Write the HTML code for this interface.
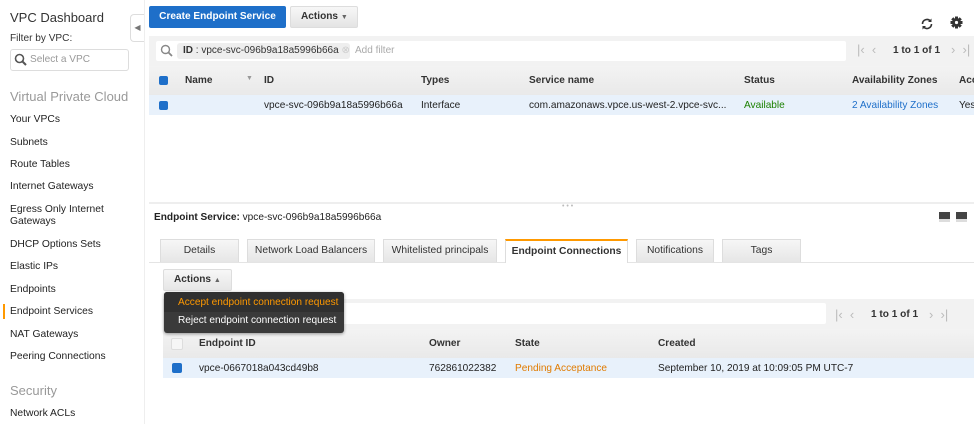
<!DOCTYPE html>
<html><head><style>
*{box-sizing:border-box;margin:0;padding:0}
body{width:974px;height:424px;overflow:hidden;background:#fff;font-family:"Liberation Sans",Arial,sans-serif;font-size:10.1px;color:#222;position:relative}
.a{position:absolute;white-space:nowrap}
.side{position:absolute;left:0;top:0;width:145px;height:424px;background:#fff;border-right:1px solid #eee}
.nav{left:10px;font-size:10.3px;color:#222}
.gray{background:#f2f2f2}
.hdr{font-weight:bold;color:#333}
.cb{position:absolute;width:9px;height:9px;background:#1e6fc9;border-radius:2px}
.tab{position:absolute;top:239px;height:23px;background:linear-gradient(#f6f6f6,#e6e6e6);border:1px solid #ddd;border-bottom:none;text-align:center;line-height:22px;color:#333;font-size:10.3px}
.pg{color:#bbb;font-size:13px}
</style></head><body>
<div class="side"></div>
<div class="a" style="left:10px;top:10px;font-size:13px;color:#333">VPC Dashboard</div>
<div class="a" style="left:10px;top:33px;color:#333">Filter by VPC:</div>
<div class="a" style="left:10px;top:49px;width:119px;height:22px;border:1px solid #ddd;border-radius:3px"></div>
<svg class="a" style="left:14px;top:53px" width="14" height="14"><circle cx="5.5" cy="5.5" r="4" fill="none" stroke="#555" stroke-width="1.6"/><line x1="8.5" y1="8.5" x2="12" y2="12" stroke="#555" stroke-width="2"/></svg>
<div class="a" style="left:30px;top:54px;color:#999">Select a VPC</div>
<div class="a" style="left:10px;top:89px;font-size:13px;color:#999">Virtual Private Cloud</div>
<div class="a nav" style="top:114px">Your VPCs</div>
<div class="a nav" style="top:137px">Subnets</div>
<div class="a nav" style="top:159px">Route Tables</div>
<div class="a nav" style="top:181px">Internet Gateways</div>
<div class="a nav" style="top:204px">Egress Only Internet</div>
<div class="a nav" style="top:216px">Gateways</div>
<div class="a nav" style="top:239px">DHCP Options Sets</div>
<div class="a nav" style="top:261px">Elastic IPs</div>
<div class="a nav" style="top:284px">Endpoints</div>
<div class="a" style="left:3px;top:304px;width:2px;height:15px;background:#f90"></div>
<div class="a nav" style="top:306px">Endpoint Services</div>
<div class="a nav" style="top:329px">NAT Gateways</div>
<div class="a nav" style="top:351px">Peering Connections</div>
<div class="a" style="left:10px;top:383px;font-size:13px;color:#999">Security</div>
<div class="a nav" style="top:408px">Network ACLs</div>
<div class="a" style="left:130px;top:14px;width:14px;height:28px;border:1px solid #ddd;border-right:none;border-radius:4px 0 0 4px;background:#fff;color:#777;font-size:8px;line-height:26px;text-align:center">◀</div>

<div class="a" style="left:149px;top:6px;width:137px;height:22px;background:#1e6fc9;border-radius:2px;color:#fff;font-weight:bold;text-align:center;line-height:22px">Create Endpoint Service</div>
<div class="a" style="left:290px;top:6px;width:68px;height:22px;background:linear-gradient(#f7f7f7,#e4e4e4);border:1px solid #ddd;border-radius:2px;font-weight:bold;line-height:20px;padding-left:10px;color:#333">Actions <span style="font-size:7px;color:#666">▼</span></div>
<svg class="a" style="left:920px;top:17px" width="14" height="14" viewBox="0 0 14 14"><path d="M2.5 7a4.5 4.5 0 0 1 8-2.8M11.5 7a4.5 4.5 0 0 1-8 2.8" fill="none" stroke="#333" stroke-width="1.6"/><path d="M11.5 1.5v3.5H8zM2.5 12.5V9H6z" fill="#333"/></svg>
<svg class="a" style="left:950px;top:16px" width="13" height="13" viewBox="0 0 13 13"><g fill="#333"><circle cx="6.5" cy="6.5" r="4.2"/><rect x="5" y="0.5" width="3" height="12"/><rect x="0.5" y="5" width="12" height="3"/><rect x="5" y="0.5" width="3" height="12" transform="rotate(45 6.5 6.5)"/><rect x="5" y="0.5" width="3" height="12" transform="rotate(-45 6.5 6.5)"/></g><circle cx="6.5" cy="6.5" r="1.6" fill="#fff"/></svg>

<div class="a gray" style="left:149px;top:36px;width:825px;height:30px"></div>
<div class="a" style="left:156px;top:41px;width:690px;height:20px;background:#fff;border-radius:2px"></div>
<svg class="a" style="left:160px;top:44px" width="14" height="14"><circle cx="5.5" cy="5.5" r="4" fill="none" stroke="#888" stroke-width="1.4"/><line x1="8.5" y1="8.5" x2="12" y2="12" stroke="#888" stroke-width="1.8"/></svg>
<div class="a" style="left:177px;top:43px;width:173px;height:16px;background:#eee;border-radius:3px;padding-left:6px;line-height:16px;font-size:10px;color:#333"><b>ID</b> : vpce-svc-096b9a18a5996b66a <span style="color:#ccc">⊗</span></div>
<div class="a" style="left:355px;top:45px;color:#aaa;font-size:10px">Add filter</div>
<div class="a pg" style="left:857px;top:42px">|‹ &nbsp;‹</div>
<div class="a" style="left:893px;top:45px;font-weight:bold;color:#333">1 to 1 of 1</div>
<div class="a pg" style="left:951px;top:42px">› &nbsp;›|</div>

<div class="a" style="left:149px;top:66px;width:825px;height:29px;background:linear-gradient(#f3f3f3,#e9e9e9)"></div>
<div class="cb" style="left:159px;top:76px"></div>
<div class="a hdr" style="left:185px;top:75px">Name</div>
<div class="a" style="left:246px;top:75px;color:#999;font-size:7px">▼</div>
<div class="a hdr" style="left:264px;top:75px">ID</div>
<div class="a hdr" style="left:421px;top:75px">Types</div>
<div class="a hdr" style="left:529px;top:75px">Service name</div>
<div class="a hdr" style="left:744px;top:75px">Status</div>
<div class="a hdr" style="left:852px;top:75px">Availability Zones</div>
<div class="a hdr" style="left:959px;top:75px">Acc</div>
<div class="a" style="left:149px;top:95px;width:825px;height:20px;background:#e8f1fb"></div>
<div class="cb" style="left:159px;top:101px"></div>
<div class="a" style="left:264px;top:100px">vpce-svc-096b9a18a5996b66a</div>
<div class="a" style="left:421px;top:100px">Interface</div>
<div class="a" style="left:529px;top:100px">com.amazonaws.vpce.us-west-2.vpce-svc...</div>
<div class="a" style="left:744px;top:100px;color:#1d8102">Available</div>
<div class="a" style="left:852px;top:100px;color:#1e6fc9">2 Availability Zones</div>
<div class="a" style="left:959px;top:100px">Yes</div>

<div class="a" style="left:149px;top:202px;width:825px;height:2px;background:#eee"></div>
<div class="a" style="left:562px;top:203px;color:#bbb;font-size:7px">• • •</div>
<div class="a" style="left:154px;top:212px"><b>Endpoint Service:</b> vpce-svc-096b9a18a5996b66a</div>
<div class="a" style="left:939px;top:212px;width:11px;height:10px;background:#444;box-shadow:inset 0 -3px 0 #ddd"></div>
<div class="a" style="left:956px;top:212px;width:11px;height:10px;background:#444;box-shadow:inset 0 -3px 0 #ddd"></div>

<div class="a" style="left:149px;top:262px;width:825px;height:1px;background:#e4e4e4"></div>
<div class="tab" style="left:160px;width:79px">Details</div>
<div class="tab" style="left:247px;width:128px">Network Load Balancers</div>
<div class="tab" style="left:383px;width:114px">Whitelisted principals</div>
<div class="tab" style="left:505px;width:123px;background:#fff;border-top:2px solid #f90;font-weight:bold;height:24px">Endpoint Connections</div>
<div class="tab" style="left:636px;width:78px">Notifications</div>
<div class="tab" style="left:722px;width:79px">Tags</div>

<div class="a" style="left:163px;top:269px;width:69px;height:22px;background:linear-gradient(#f7f7f7,#e6e6e6);border:1px solid #ddd;border-radius:2px;font-weight:bold;line-height:20px;padding-left:10px;color:#333">Actions <span style="font-size:7px;color:#666">▲</span></div>

<div class="a gray" style="left:163px;top:299px;width:811px;height:30px"></div>
<div class="a" style="left:170px;top:303px;width:656px;height:21px;background:#fff;border-radius:2px"></div>
<div class="a pg" style="left:835px;top:307px">|‹ &nbsp;‹</div>
<div class="a" style="left:871px;top:309px;font-weight:bold;color:#333">1 to 1 of 1</div>
<div class="a pg" style="left:929px;top:307px">› &nbsp;›|</div>

<div class="a" style="left:163px;top:329px;width:811px;height:29px;background:linear-gradient(#f3f3f3,#e9e9e9)"></div>
<div class="a" style="left:171px;top:338px;width:12px;height:12px;background:#f6f6f6;border:1px solid #ddd;border-radius:2px"></div>
<div class="a hdr" style="left:199px;top:338px">Endpoint ID</div>
<div class="a hdr" style="left:429px;top:338px">Owner</div>
<div class="a hdr" style="left:515px;top:338px">State</div>
<div class="a hdr" style="left:658px;top:338px">Created</div>
<div class="a" style="left:163px;top:358px;width:811px;height:20px;background:#e8f1fb"></div>
<div class="cb" style="left:172px;top:363px;width:10px;height:10px"></div>
<div class="a" style="left:199px;top:363px">vpce-0667018a043cd49b8</div>
<div class="a" style="left:429px;top:363px">762861022382</div>
<div class="a" style="left:515px;top:363px;color:#e07b00">Pending Acceptance</div>
<div class="a" style="left:658px;top:363px">September 10, 2019 at 10:09:05 PM UTC-7</div>

<div class="a" style="left:164px;top:292px;width:180px;height:41px;background:#3a3a3a;border-radius:3px;box-shadow:0 1px 3px rgba(0,0,0,.4)">
<div style="height:20px;background:#303030;color:#f90;padding-left:14px;line-height:22px;border-radius:3px 3px 0 0">Accept endpoint connection request</div>
<div style="color:#fff;padding-left:14px;line-height:18px">Reject endpoint connection request</div>
</div>
</body></html>
